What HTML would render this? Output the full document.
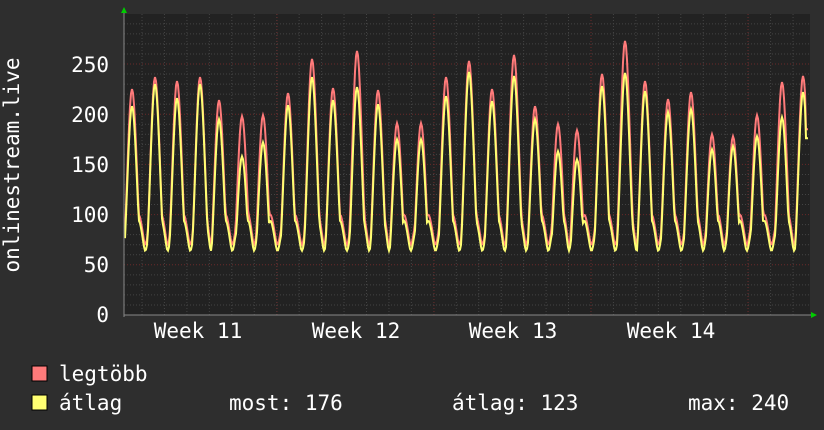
<!DOCTYPE html>
<html><head><meta charset="utf-8"><style>
html,body{margin:0;padding:0;background:#2e2e2e;width:824px;height:430px;overflow:hidden}
svg{display:block}
text{font-family:"DejaVu Sans Mono","Liberation Mono",monospace;fill:#fff}
</style></head><body>
<svg id="s" width="824" height="430" xmlns="http://www.w3.org/2000/svg">
<rect width="824" height="430" fill="#2e2e2e"/>
<rect x="124" y="14" width="686" height="301" fill="#222"/>
<g id="grid"></g>
<path id="red" fill="none" stroke="#ff7a7a" stroke-width="2"/>
<path id="yel" fill="none" stroke="#ffff72" stroke-width="2"/>
<line x1="124" y1="315" x2="812" y2="315" stroke="#888" stroke-width="1"/>
<line x1="124" y1="12" x2="124" y2="317" stroke="#888" stroke-width="1"/>
<polygon points="121,13 127,13 124,7" fill="#0c0"/>
<polygon points="811,312 811,318 817,315" fill="#0c0"/>
<g font-size="21" text-anchor="end">
<text x="109" y="72">250</text><text x="109" y="122">200</text><text x="109" y="172">150</text>
<text x="109" y="222">100</text><text x="109" y="272">50</text><text x="109" y="322">0</text>
</g>
<text transform="translate(19,165) rotate(-90)" font-size="21" text-anchor="middle">onlinestream.live</text>
<g font-size="21" text-anchor="middle">
<text x="198" y="338">Week 11</text><text x="356" y="338">Week 12</text>
<text x="513" y="338">Week 13</text><text x="671" y="338">Week 14</text>
</g>
<rect x="32" y="366" width="15" height="15" fill="#ff7a7a" stroke="#000"/>
<rect x="32" y="395" width="15" height="15" fill="#ffff72" stroke="#000"/>
<g font-size="21">
<text x="59" y="381">legtöbb</text>
<text x="59" y="410">átlag</text>
<text x="229" y="410">most: 176</text>
<text x="452" y="410">átlag: 123</text>
<text x="688" y="410">max: 240</text>
</g>
</svg>
<script>
var g=document.getElementById('grid'),h='';
for(var v=10;v<=300;v+=10){var y=315-v*1.004;if(y<14)break;
h+='<line x1="124" x2="810" y1="'+y+'" y2="'+y+'" stroke="'+(v%50==0?'#6a2a2a':'#444')+'" stroke-dasharray="1,2"/>';}
for(var k=0;k<31;k++){var x=142+k*22.45;if(x>810)break;h+='<line y1="14" y2="315" x1="'+x+'" x2="'+x+'" stroke="#444" stroke-dasharray="1,2"/>';}
[277,434,591,748].forEach(function(w){h+='<line y1="14" y2="315" x1="'+w+'" x2="'+w+'" stroke="#6a2a2a" stroke-dasharray="1,2"/>';});
g.innerHTML=h;
var px=[132,155,177,200,219,242,263,288,312,333,357,378,397,421,446,469,492,514,535,558,577,602,625,645,668,691,712,733,757,782,803];
var ry=[90,78,82,78,101,117,116,94,60,89,52,91,124,124,78,62,90,56,107,125,131,75,42,82,100,93,135,137,116,83,77];
var yy=[107,85,99,85,120,157,143,106,78,101,88,105,140,140,97,73,102,77,120,152,160,87,74,92,113,110,150,147,137,118,93];
function val(x,arr,off){
  var i=0;while(i<px.length-1&&px[i+1]<x)i++;
  var v=-1;
  for(var j=Math.max(0,i-1);j<=Math.min(px.length-1,i+1);j++){var d=x-px[j];var P=315-arr[j];var s=d<0?7:7.5;
    v=Math.max(v,P*Math.exp(-(d*d)/(s*s)));}
  var a=px[i],b=px[i+1]||px[i]+22.5;var t=x<a?(x-(a-22.5))/22.5:(x-a)/(b-a);
  var base=off+88-22*Math.exp(-Math.pow((t-0.58)/0.13,2))+8*Math.exp(-Math.pow((t-0.3)/0.1,2));
  return Math.max(v,base);}
function path(arr,off,end){var s='';for(var x=125;x<=808;x++){var v=val(x,arr,off);if(x>=806)v=end;
var y=Math.max(15,Math.min(314,315-v*1.004));s+=(x==125?'M':'L')+x+','+y.toFixed(1);}return s;}
document.getElementById('red').setAttribute('d',path(ry,4,185));
document.getElementById('yel').setAttribute('d',path(yy,-2,176));
</script>
</body></html>
